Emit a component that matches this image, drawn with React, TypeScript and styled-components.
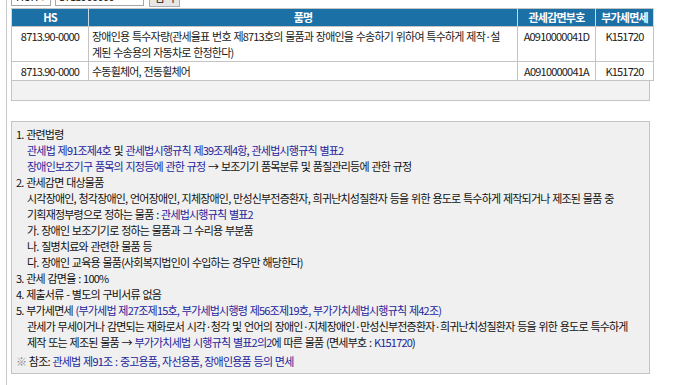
import styled, { createGlobalStyle } from "styled-components";

const GlobalStyle = createGlobalStyle`
  html, body {
    margin: 0;
    padding: 0;
    background: #ffffff;
  }
  body {
    font-family: "Noto Sans CJK KR", "Noto Sans", sans-serif;
    font-size: 11px;
    color: #111;
  }
`;

const Page = styled.div`
  margin-left: 6px;
  border-left: 1px solid #c8c8c8;
  padding: 0 4px;
  min-height: 100vh;
  box-sizing: border-box;
  overflow: hidden;
`;

const SearchBar = styled.div`
  display: flex;
  align-items: flex-start;
  gap: 4px;
  margin-top: -14px;
  height: 20px;
  margin-bottom: 2px;
`;

const SelectBox = styled.div`
  width: 40px;
  height: 20px;
  box-sizing: border-box;
  border: 1px solid #a6a6a6;
  background: #fff;
  padding: 0 4px;
  font-size: 11px;
  line-height: 18px;
  display: flex;
  justify-content: space-between;
`;

const SearchInput = styled.input`
  width: 89px;
  height: 20px;
  box-sizing: border-box;
  border: 1px solid #a6a6a6;
  padding: 0 3px;
  font: inherit;
  font-size: 11px;
  letter-spacing: -0.6px;
  color: #111;
`;

const SearchButton = styled.button`
  width: 31px;
  height: 21px;
  margin-left: 1px;
  box-sizing: border-box;
  border: 1px solid #adadad;
  background: #e6e6e6;
  font: inherit;
  font-size: 11px;
  padding: 0;
  color: #111;
`;

const Table = styled.table`
  width: 639px;
  border-collapse: collapse;
  table-layout: fixed;
  font-size: 11px;
  letter-spacing: -0.8px;
  word-spacing: 1px;
`;

const Th = styled.th<{ $w: number }>`
  width: ${(p) => p.$w}px;
  height: 17px;
  padding: 0;
  background: #1b70a6;
  color: #fff;
  font-weight: 700;
  line-height: 17px;
  text-align: center;
  border: 1px solid #c4c4c4;
  border-left-color: #c9d9e6;
  border-right-color: #c9d9e6;
`;

const Td = styled.td<{ $align?: "left" | "center" }>`
  padding: 1px 3px;
  border: 1px solid #c4c4c4;
  vertical-align: top;
  line-height: 16px;
  text-align: ${(p) => p.$align ?? "center"};
  color: #1a1a1a;
  white-space: nowrap;
`;

const ListFoot = styled.div`
  width: 639px;
  height: 19px;
  box-sizing: content-box;
  background: #f2f2f2;
  border: 1px solid #c4c4c4;
  border-top: none;
  box-sizing: border-box;
  height: 20px;
`;

const Notes = styled.div`
  width: 639px;
  box-sizing: border-box;
  margin-top: 20px;
  border: 1px solid #c4c4c4;
  background: #f0f0f0;
  padding: 4px 4px 4px 4px;
  line-height: 16px;
  font-size: 11px;
  letter-spacing: -0.8px;
  word-spacing: 1px;
  white-space: nowrap;
`;

const Heading = styled.div``;

const Sub = styled.div`
  padding-left: 11px;
`;

const Ref = styled.span`
  color: #24249c;
`;

const RefNote = styled.div`
  margin-top: 3px;
`;

const Mark = styled.span`
  color: #8a8a8a;
`;

const rows = [
  {
    hs: "8713.90-0000",
    name: ["장애인용 특수자량(관세율표 번호 제8713호의 물품과 장애인을 수송하기 위하여 특수하게 제작·설", "계된 수송용의 자동차로 한정한다)"],
    code: "A0910000041D",
    vat: "K151720",
  },
  {
    hs: "8713.90-0000",
    name: ["수동휠체어, 전동휠체어"],
    code: "A0910000041A",
    vat: "K151720",
  },
];

export default function App() {
  return (
    <>
      <GlobalStyle />
      <Page>
        <SearchBar>
          <SelectBox>
            <span>HSK</span>
            <span>▾</span>
          </SelectBox>
          <SearchInput value="8713900000" readOnly />
          <SearchButton>검색</SearchButton>
        </SearchBar>

        <Table>
          <thead>
            <tr>
              <Th $w={76}>HS</Th>
              <Th $w={428}>품명</Th>
              <Th $w={77}>관세감면부호</Th>
              <Th $w={57}>부가세면세</Th>
            </tr>
          </thead>
          <tbody>
            {rows.map((r) => (
              <tr key={r.code}>
                <Td>{r.hs}</Td>
                <Td $align="left">
                  {r.name.map((line, i) => (
                    <div key={i}>{line}</div>
                  ))}
                </Td>
                <Td>{r.code}</Td>
                <Td>{r.vat}</Td>
              </tr>
            ))}
          </tbody>
        </Table>
        <ListFoot />

        <Notes>
          <Heading>1. 관련법령</Heading>
          <Sub>
            <Ref>관세법 제91조제4호</Ref> 및 <Ref>관세법시행규칙 제39조제4항</Ref>, <Ref>관세법시행규칙 별표2</Ref>
          </Sub>
          <Sub>
            <Ref>장애인보조기구 품목의 지정등에 관한 규정</Ref> → 보조기기 품목분류 및 품질관리등에 관한 규정
          </Sub>
          <Heading>2. 관세감면 대상물품</Heading>
          <Sub>
            시각장애인, 청각장애인, 언어장애인, 지체장애인, 만성신부전증환자, 희귀난치성질환자 등을 위한 용도로 특수하게 제작되거나 제조된 물품 중
          </Sub>
          <Sub>
            기획재정부령으로 정하는 물품 : <Ref>관세법시행규칙 별표2</Ref>
          </Sub>
          <Sub>가. 장애인 보조기기로 정하는 물품과 그 수리용 부분품</Sub>
          <Sub>나. 질병치료와 관련한 물품 등</Sub>
          <Sub>다. 장애인 교육용 물품(사회복지법인이 수입하는 경우만 해당한다)</Sub>
          <Heading>3. 관세 감면율 : 100%</Heading>
          <Heading>4. 제출서류 - 별도의 구비서류 없음</Heading>
          <Heading>
            5. 부가세면세 <Ref>(부가세법 제27조제15호, 부가세법시행령 제56조제19호, 부가가치세법시행규칙 제42조)</Ref>
          </Heading>
          <Sub>
            관세가 무세이거나 감면되는 재화로서 시각·청각 및 언어의 장애인·지체장애인·만성신부전증환자·희귀난치성질환자 등을 위한 용도로 특수하게
          </Sub>
          <Sub>
            제작 또는 제조된 물품 → <Ref>부가가치세법 시행규칙 별표2의2</Ref>에 따른 물품 (면세부호 : <Ref>K151720</Ref>)
          </Sub>
          <RefNote>
            <Mark>※</Mark> 참조: <Ref>관세법 제91조 : 중고용품, 자선용품, 장애인용품 등의 면세</Ref>
          </RefNote>
        </Notes>
      </Page>
    </>
  );
}
